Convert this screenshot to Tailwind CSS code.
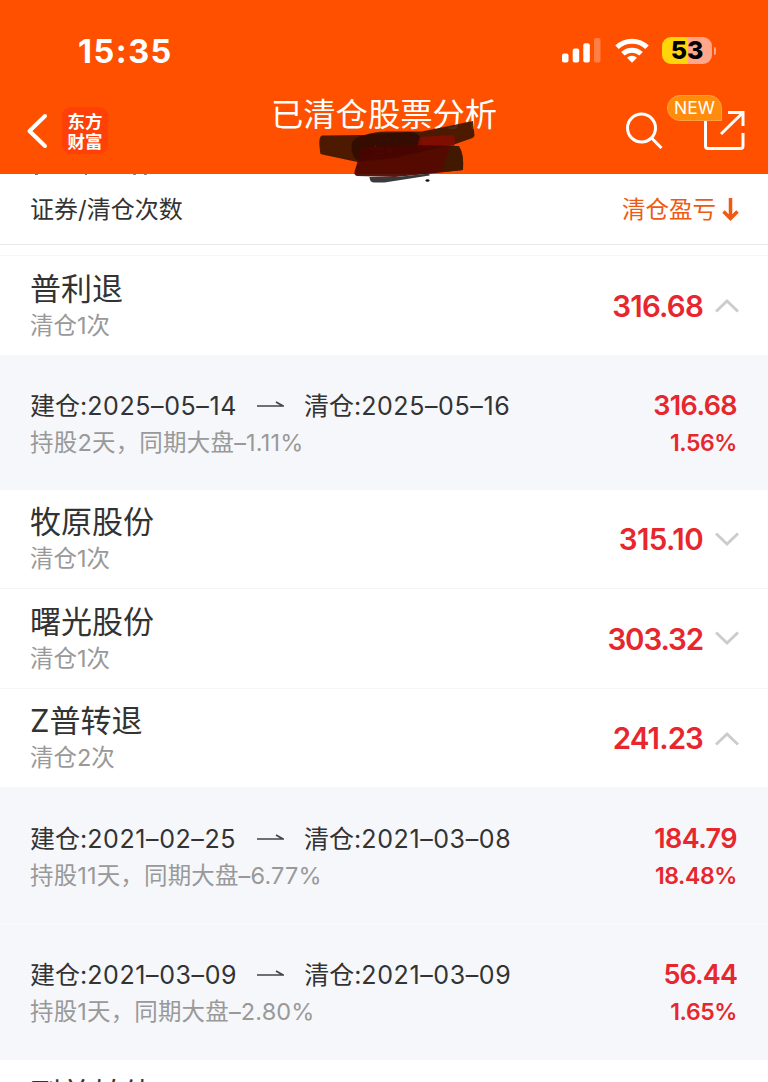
<!DOCTYPE html>
<html lang="zh-CN">
<head>
<meta charset="utf-8">
<title>已清仓股票分析</title>
<script src="https://cdn.jsdelivr.net/npm/@tailwindcss/browser@4"></script>
</head>
<body class="bg-white">
<div class="relative flex h-[1082px] w-[768px] flex-col overflow-hidden bg-white font-['Inter','Noto_Sans_CJK_SC',sans-serif] text-[#333]">

  <header class="relative h-[174px] shrink-0 bg-[#ff5000] text-white">
    <div class="flex h-[76px] items-end justify-between pr-[52px] pl-[78px]">
      <div class="h-[49px] text-[32.500px] leading-[49px] font-bold tracking-[1.500px]">15:35</div>
      <div class="flex h-[51px] items-center">
        <svg class="h-[25px] w-[39px]" viewBox="0 0 39 25" fill="#fff">
          <rect x="0" y="15.500" width="6.500" height="9" rx="2"/><rect x="10.700" y="10.500" width="6.500" height="14" rx="2"/><rect x="21.300" y="5.200" width="6.500" height="19.300" rx="2"/><rect x="32" y="0" width="6.500" height="24.500" rx="2" opacity=".28"/>
        </svg>
        <svg class="ml-[14px] h-[25px] w-[34px]" viewBox="0 0 34 25" fill="none" stroke="#fff" stroke-width="5">
          <path d="M2 9.300a21.500 21.500 0 0 1 30 0"/><path d="M7.900 15.800a13.200 13.200 0 0 1 18.200 0"/><path d="M17 24.800l-5-5a7.300 7.300 0 0 1 10 0z" fill="#fff" stroke="none"/>
        </svg>
        <div class="ml-[13px] flex h-[27px] w-[50px] items-center justify-center rounded-[9px] bg-linear-to-r from-[#ffd60a] from-53% to-[#ffa68b] to-53% text-[25px] leading-[27px] font-extrabold text-black">53</div>
        <div class="ml-[2px] h-[8px] w-[2px] rounded-r-full bg-[#ffa68b]"></div>
      </div>
    </div>
    <div class="flex h-[98px] pl-[26px]">
      <svg class="mt-[37px] h-[36px] w-[22px]" viewBox="0 0 22 36" fill="none" stroke="#fff" stroke-width="4" stroke-linecap="round" stroke-linejoin="round"><path d="M19 3L3.500 18 19 33"/></svg>
      <div class="mt-[31px] ml-[14px] flex h-[47px] w-[46px] flex-col items-center justify-center rounded-[9px] bg-[#ff4009] font-['Noto_Sans_CJK_SC',sans-serif] text-[17.500px] leading-[20px] font-bold"><span>东方</span><span>财富</span></div>
      <h1 class="mt-[19px] ml-[163px] h-[40px] w-[226px] text-[32.300px] leading-[40px] font-normal whitespace-nowrap">已清仓股票分析</h1>
      <svg class="mt-[35px] ml-[129px] h-[38px] w-[37px]" viewBox="0 0 37 38" fill="none" stroke="#fff" stroke-width="3"><circle cx="15.500" cy="17" r="14"/><path d="M25.500 27l10 10"/></svg>
      <svg class="mt-[33px] ml-[41px] h-[42px] w-[42px]" viewBox="0 0 42 42" fill="none" stroke="#fff" stroke-width="3"><path d="M1.500 12v25q0 2.500 2.500 2.500h32.500q2.500 0 2.500-2.500V24M24 3.500h15v13.500M38.500 4L17 25"/></svg>
    </div>
    <div class="absolute top-[95px] left-[667px] flex h-[26px] w-[55px] items-center justify-center rounded-[13px] rounded-br-none border border-[#ff9f45] bg-[#ff8c0b] text-[17.500px] leading-[24px]">NEW</div>
  </header>

  <div class="flex h-[71px] shrink-0 items-center justify-between border-b border-[#e8e8e8] pt-[2px] pr-[29px] pl-[30px] text-[23.500px] leading-[36px]">
    <span class="text-[24px]">证券/清仓次数</span>
    <span class="flex items-center text-[#ee5a12]">清仓盈亏<svg class="ml-[6px] h-[24px] w-[17px]" viewBox="0 0 17 24" fill="none" stroke="#ee5a12" stroke-width="3.500"><path d="M8.500 0v21M1.500 13.500l7 7 7-7"/></svg></span>
  </div>
  <div class="h-[11px] shrink-0 border-b border-[#f5f5f5]"></div>

  <section class="flex h-[99px] shrink-0 justify-between pr-[29px] pl-[30px]">
    <div class="pt-[12px]"><div class="text-[31px] leading-[42px]">普利退</div><div class="text-[23.500px] leading-[32px] text-[#999]">清仓1次</div></div>
    <div class="flex items-center text-[29.500px] leading-[40px] font-semibold tracking-[-0.800px] text-[#e7262d]">316.68<svg class="ml-[12px] h-[15px] w-[24px]" viewBox="0 0 24 15" fill="none" stroke="#ccc" stroke-width="3"><path d="M1 13.500L12 3l11 10.500"/></svg></div>
  </section>

  <section class="flex h-[135px] shrink-0 justify-between bg-[#f6f7fa] pt-[31px] pr-[31px] pl-[30px]">
    <div><div class="flex items-center text-[25px] leading-[40px]"><span>建仓:<span class="tracking-[0.600px]">2025–05–14</span></span><svg class="mr-[20px] mb-[4px] ml-[20px] h-[8px] w-[27px]" viewBox="0 0 27 8" fill="none" stroke="#444" stroke-width="1.700"><path d="M0 6h26l-7-4"/></svg><span>清仓:<span class="tracking-[0.600px]">2025–05–16</span></span></div><div class="text-[23.500px] leading-[34px] tracking-[0.200px] text-[#999]">持股2天，同期大盘–1.11%</div></div>
    <div class="text-right font-semibold text-[#e7262d]"><div class="text-[27px] leading-[40px] tracking-[-0.600px]">316.68</div><div class="text-[23px] leading-[34px] tracking-[-0.400px]">1.56%</div></div>
  </section>

  <section class="flex h-[99px] shrink-0 justify-between border-b border-[#f5f5f5] pr-[29px] pl-[30px]">
    <div class="pt-[11px]"><div class="text-[31px] leading-[42px]">牧原股份</div><div class="text-[23.500px] leading-[32px] text-[#999]">清仓1次</div></div>
    <div class="flex items-center text-[29.500px] leading-[40px] font-semibold tracking-[-0.600px] text-[#e7262d]">315.10<svg class="ml-[12px] h-[15px] w-[24px]" viewBox="0 0 24 15" fill="none" stroke="#ccc" stroke-width="3"><path d="M1 1.500L12 12 23 1.500"/></svg></div>
  </section>

  <section class="flex h-[100px] shrink-0 justify-between border-b border-[#f5f5f5] pr-[29px] pl-[30px]">
    <div class="pt-[12px]"><div class="text-[31px] leading-[42px]">曙光股份</div><div class="text-[23.500px] leading-[32px] text-[#999]">清仓1次</div></div>
    <div class="flex items-center text-[29.500px] leading-[40px] font-semibold tracking-[-1.100px] text-[#e7262d]">303.32<svg class="ml-[12px] h-[15px] w-[24px]" viewBox="0 0 24 15" fill="none" stroke="#ccc" stroke-width="3"><path d="M1 1.500L12 12 23 1.500"/></svg></div>
  </section>

  <section class="flex h-[98px] shrink-0 justify-between pr-[29px] pl-[30px]">
    <div class="pt-[11px]"><div class="text-[31px] leading-[42px]">Z普转退</div><div class="text-[23.500px] leading-[32px] text-[#999]">清仓2次</div></div>
    <div class="flex items-center text-[29.500px] leading-[40px] font-semibold tracking-[-0.900px] text-[#e7262d]">241.23<svg class="ml-[12px] h-[15px] w-[24px]" viewBox="0 0 24 15" fill="none" stroke="#ccc" stroke-width="3"><path d="M1 13.500L12 3l11 10.500"/></svg></div>
  </section>

  <section class="flex h-[137px] shrink-0 justify-between border-b border-[#f9fafb] bg-[#f6f7fa] pt-[32px] pr-[31px] pl-[30px]">
    <div><div class="flex items-center text-[25px] leading-[40px]"><span>建仓:<span class="tracking-[0.600px]">2021–02–25</span></span><svg class="mr-[20px] mb-[4px] ml-[21px] h-[8px] w-[27px]" viewBox="0 0 27 8" fill="none" stroke="#444" stroke-width="1.700"><path d="M0 6h26l-7-4"/></svg><span>清仓:<span class="tracking-[0.600px]">2021–03–08</span></span></div><div class="text-[23.500px] leading-[34px] tracking-[0.150px] text-[#999]">持股11天，同期大盘–6.77%</div></div>
    <div class="text-right font-semibold text-[#e7262d]"><div class="text-[27px] leading-[40px] tracking-[-0.600px]">184.79</div><div class="text-[23px] leading-[34px] tracking-[-0.400px]">18.48%</div></div>
  </section>

  <section class="flex h-[136px] shrink-0 justify-between bg-[#f6f7fa] pt-[31px] pr-[31px] pl-[30px]">
    <div><div class="flex items-center text-[25px] leading-[40px]"><span>建仓:<span class="tracking-[0.600px]">2021–03–09</span></span><svg class="mr-[20px] mb-[4px] ml-[20px] h-[8px] w-[27px]" viewBox="0 0 27 8" fill="none" stroke="#444" stroke-width="1.700"><path d="M0 6h26l-7-4"/></svg><span>清仓:<span class="tracking-[0.600px]">2021–03–09</span></span></div><div class="text-[23.500px] leading-[34px] tracking-[0.150px] text-[#999]">持股1天，同期大盘–2.80%</div></div>
    <div class="text-right font-semibold text-[#e7262d]"><div class="text-[27px] leading-[40px] tracking-[-0.900px]">56.44</div><div class="text-[23px] leading-[34px] tracking-[-0.400px]">1.65%</div></div>
  </section>

  <section class="h-[99px] shrink-0 pt-[13px] pl-[30px]"><div class="text-[31px] leading-[42px]">到普转债</div></section>

  <svg class="absolute top-[115px] left-[315px] h-[72px] w-[165px]" viewBox="315 115 165 72">
    <path d="M322 135.500l43-.500q10-4 25-3.500h32l51-10.500 1.500 15-2 2-17 6-60 14-38 4-33-7-4-1q-3-17 1.500-18.500z" fill="#3a1400" opacity=".9"/>
    <path d="M352 142q5-7 20-8l40-2q8 2 10 8l-2 12-64 8q-6-8-4-18z" fill="#2a0800" opacity=".7"/>
    <path d="M420 137l33-2q4 5 1 11l-38 4z" fill="#8c0a00" opacity=".8"/>
    <text x="369" y="159" font-size="16" fill="#6d1c0c">左*</text>
    <path d="M362 147l50-2 46 1q6 6 5 24l-36 4-32 3-38-1q-4-1-2-6z" fill="#480500" opacity=".93"/>
    <path d="M450 146h9q5 8 4 24l-20 2 2-10z" fill="#401900"/>
    <path d="M369.500 177l27 0 33-3.500v2l-45 7h-10q-5 0-5-5.500z" fill="#3a3a3c"/>
    <ellipse cx="427.500" cy="180.500" rx="2" ry="1.200" fill="#111"/>
  </svg>
  <div class="absolute top-[174px] left-[35px] flex h-[1px] w-[112px] justify-between"><i class="w-[3px] bg-[#777]"></i><i class="w-[2px] bg-[#777]"></i><i class="w-[14px] border-x-3 border-[#888]"></i></div>
</div>
</body>
</html>
